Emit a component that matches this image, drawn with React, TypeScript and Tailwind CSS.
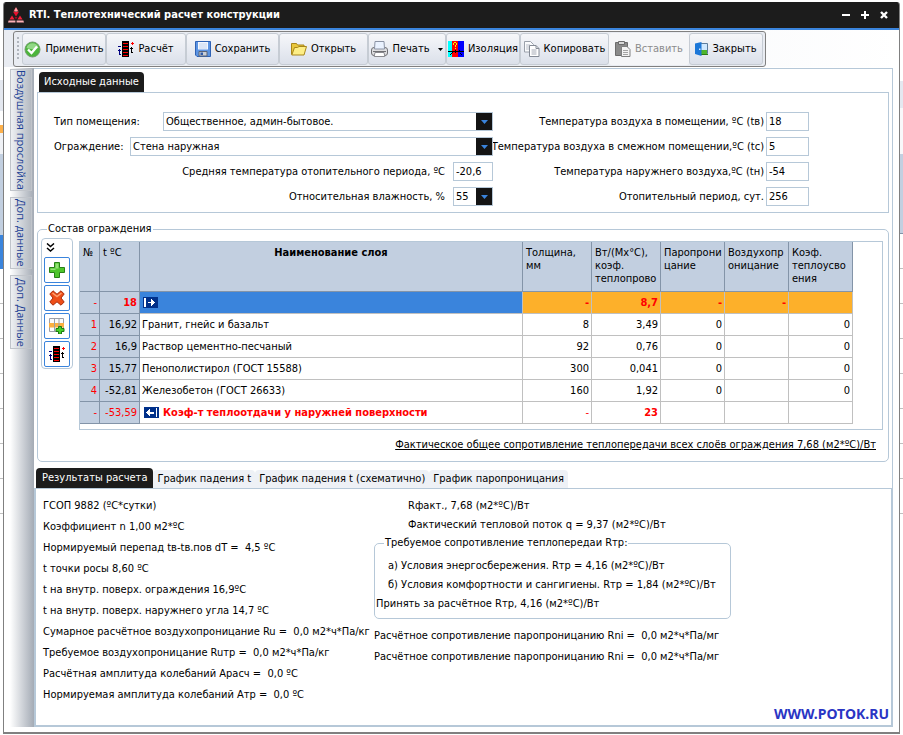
import { useState, type ReactNode } from 'react'

interface Layer {
  num: string
  temp: string
  name: string
  thickness: string
  conductivity: string
  vapor: string
  heat: string
}

const layers: Layer[] = [
  { num: '1', temp: '16,92', name: 'Гранит, гнейс и базальт', thickness: '8', conductivity: '3,49', vapor: '0', heat: '0' },
  { num: '2', temp: '16,9', name: 'Раствор цементно-песчаный', thickness: '92', conductivity: '0,76', vapor: '0', heat: '0' },
  { num: '3', temp: '15,77', name: 'Пенополистирол (ГОСТ 15588)', thickness: '300', conductivity: '0,041', vapor: '0', heat: '0' },
  { num: '4', temp: '-52,81', name: 'Железобетон (ГОСТ 26633)', thickness: '160', conductivity: '1,92', vapor: '0', heat: '0' },
]

const results = [
  'ГСОП 9882 (ºC*сутки)',
  'Коэффициент n 1,00 м2*ºC',
  'Нормируемый перепад tв-tв.пов dT =\u00a0 4,5 ºC',
  't точки росы 8,60 ºC',
  't на внутр. поверх. ограждения 16,9ºC',
  't на внутр. поверх. наружнего угла 14,7 ºC',
  'Сумарное расчётное воздухопроницание Ru =\u00a0 0,0 м2*ч*Па/кг',
  'Требуемое воздухопроницание Ruтр =\u00a0 0,0 м2*ч*Па/кг',
  'Расчётная амплитуда колебаний Арасч =\u00a0 0,0 ºC',
  'Нормируемая амплитуда колебаний Атр =\u00a0 0,0 ºC',
]

const resultTabs = ['Результаты расчета', 'График падения t', 'График падения t (схематично)', 'График паропроницания']

/* icons */

function LogoIcon() {
  return (
    <svg width="16" height="16" viewBox="0 0 16 16" aria-hidden="true">
      <path d="M8 0l2.600 4.600H5.400z" fill="#ff7078" />
      <path d="M5.200 5h5.600L8 9.500z" fill="#e8102c" />
      <path d="M4 8.500l2.600 4H1.400zM12 8.500l2.600 4H9.400z" fill="#f0203a" />
      <path d="M6.500 10h3L8 12.500z" fill="#a00a20" />
      <path d="M.6 13.500h6.800v2H0zM8.600 13.500h6.800l.6 2H8.600z" fill="#ffb0b6" />
      <path d="M7.500 1.500h1v3h-1z" fill="#ffd0d4" />
    </svg>
  )
}

function CheckIcon() {
  return (
    <svg width="17" height="17" viewBox="0 0 17 17" className="shrink-0" aria-hidden="true">
      <circle cx="8.500" cy="8.500" r="7.500" fill="#4cb53c" stroke="#6f9a6a" />
      <path d="M2.500 7a6.200 6.200 0 0 1 12 0c-4 1.500-8 1.500-12 0z" fill="#92d886" />
      <path d="M4 8.500l3.500 3.500L13 5.500" fill="none" stroke="#fff" strokeWidth="2.400" />
    </svg>
  )
}

function CalcIcon() {
  return (
    <svg width="16" height="16" viewBox="0 0 16 16" shapeRendering="crispEdges" className="shrink-0" aria-hidden="true">
      <path d="M4 0h7v16H4z" fill="#000" />
      <path d="M5 2h5v1H5zM5 5h5v1H5zM5 8h5v1H5zM5 11h5v1H5zM5 14h5v1H5z" fill="#f00" />
      <path d="M0 5h3v1H0zM1 8h1v1h1v1H2v3h1v1H1v-4H0V9h1z" fill="#000080" />
      <path d="M14 1h1v1h1v1h-1v1h-1V3h-1V2h1z" fill="#f00" />
      <path d="M13 6h1v1h1v1h-1v3h1v1h-2V8h-1V7h1z" fill="#000" />
    </svg>
  )
}

function SaveIcon() {
  return (
    <svg width="16" height="16" viewBox="0 0 16 16" className="shrink-0" aria-hidden="true">
      <path d="M.5.5h15v15H2L.5 14z" fill="#5b93e2" stroke="#2f62b4" />
      <path d="M3 1h10v7.500H3z" fill="#f4f8ff" />
      <path d="M4 3h8M4 5h8M4 7h8" stroke="#c3d4ee" />
      <path d="M4 10.500h8V15H4z" fill="#c9cfd8" stroke="#5a6478" />
      <path d="M5.500 11.500h2.500V14H5.500z" fill="#2f5aa8" />
    </svg>
  )
}

function FolderIcon() {
  return (
    <svg width="16" height="14" viewBox="0 0 16 14" className="shrink-0" aria-hidden="true">
      <path d="M.5 12.500V1.500h5l1 1.500h6.500v2.500" fill="#e9c73c" stroke="#a8861a" />
      <path d="M.8 13l2.700-7.500h3L8 4.500h7.500L13 13z" fill="#fdee86" stroke="#a8861a" />
    </svg>
  )
}

function PrinterIcon() {
  return (
    <svg width="17" height="16" viewBox="0 0 17 16" className="shrink-0" aria-hidden="true">
      <rect x=".5" y="6.500" width="16" height="8" rx="2.500" fill="#dedee0" stroke="#707074" />
      <path d="M4 .5h9l.5 7.500h-10z" fill="#eaf2ff" stroke="#8b93a4" />
      <path d="M2 10.500h13" stroke="#707074" />
      <path d="M4 11.500h9l.8 4H3.200z" fill="#fff" stroke="#8b8b90" />
    </svg>
  )
}

function IsolationIcon() {
  return (
    <svg width="16" height="16" viewBox="0 0 16 16" shapeRendering="crispEdges" className="shrink-0" aria-hidden="true">
      <path d="M0 0h4v16H0z" fill="#0ff" />
      <path d="M4 0h6v16H4z" fill="#f00" />
      <path d="M10 0h6v16h-6z" fill="#00f" />
      <path d="M5 2h1v2H5zM6 1h2v1H6zM8 2h1v2H8zM7 4h1v2H7zM7 7h1v1H7z" fill="#ff0" />
      <path d="M0 10h16v1H0zM3 12h1v-1h1v1H4v1H3v1H2v-1h1zM11 9h1v1h-1zM12 12h1v1h1v1h-1v-1h-1zM7 9h1v3H7z" fill="#000" />
    </svg>
  )
}

function CopyIcon() {
  return (
    <svg width="16" height="16" viewBox="0 0 16 16" className="shrink-0" aria-hidden="true">
      <path d="M.5.5h6l3 3V11h-9z" fill="#fafbfd" stroke="#9aa0aa" />
      <path d="M2 4h4M2 6h4M2 8h4" stroke="#b9bec8" />
      <path d="M5.500 4.500h6.500l3 3v8H5.500z" fill="#fff" stroke="#858b96" />
      <path d="M12 4.500v3h3" fill="none" stroke="#858b96" />
      <path d="M7.500 9h5M7.500 11h5M7.500 13h5" stroke="#a4a9b4" />
    </svg>
  )
}

function PasteIcon() {
  return (
    <svg width="16" height="16" viewBox="0 0 16 16" className="shrink-0" aria-hidden="true">
      <path d="M.5 1.500h12v13H.5z" fill="#8a8a8a" stroke="#6c6c6c" />
      <path d="M3.500.5h6v3h-6z" fill="#d8d8d8" stroke="#6c6c6c" />
      <path d="M6.500 5.500H12l3 3v7H6.500z" fill="#f4f4f4" stroke="#808080" />
      <path d="M8 9.500h5M8 11.500h5M8 13.500h5" stroke="#a4a4a4" />
    </svg>
  )
}

function DoorIcon() {
  return (
    <svg width="13" height="14" viewBox="0 0 13 14" className="shrink-0" aria-hidden="true">
      <path d="M5.500 1.500h7v10h-7z" fill="#cfe8ff" stroke="#5d7c9c" />
      <path d="M6 8h6v4H6z" fill="#4fb52c" />
      <path d="M6 12.500h7" stroke="#2b7a14" />
      <path d="M0 1.500L6.500 0v14L0 12z" fill="#1c77d8" />
      <path d="M4 6.500h1.500v1.500H4z" fill="#d9edff" />
    </svg>
  )
}

function PlusIcon() {
  return (
    <svg width="16" height="16" viewBox="0 0 16 16" aria-hidden="true">
      <path d="M5.500.5h5v5h5v5h-5v5h-5v-5h-5v-5h5z" fill="#4fc52c" stroke="#268016" />
      <path d="M6.500 1.500h3v5h-3zM1.500 6.500h5v1.500h-5z" fill="#93e276" />
    </svg>
  )
}

function CrossIcon() {
  return (
    <svg width="16" height="16" viewBox="0 0 16 16" aria-hidden="true">
      <path
        d="M4 .8L8 4.200 12 .8 15.200 4 12 8l3.200 4-3.200 3.200L8 11.800 4 15.200.8 12 4 8 .8 4z"
        fill="#ee4e18"
        stroke="#a82c0a"
        strokeLinejoin="round"
      />
      <path d="M3.500 3L8 6.500 12.500 3" fill="none" stroke="#ffa070" strokeWidth="1.500" />
    </svg>
  )
}

function AddRowIcon() {
  return (
    <svg width="16" height="16" viewBox="0 0 16 16" aria-hidden="true">
      <path d="M.5.500h14v13H.5z" fill="#fafbfc" stroke="#9a9fa8" />
      <path d="M0 5h15v4.500H0z" fill="#fbb040" />
      <path d="M5.500 0v14M10 0v14" stroke="#9a9fa8" />
      <path d="M9.500 8.500h3v2h2.500v3h-2.500V16h-3v-2.500H7v-3h2.500z" fill="#46d02a" stroke="#1d7a10" />
    </svg>
  )
}

function ArrowBadge({ back }: { back?: boolean }) {
  return (
    <svg width="15" height="11" viewBox="0 0 15 11" shapeRendering="crispEdges" aria-hidden="true">
      <path d="M0 0h15v11H0z" fill="#00308a" />
      {back ? (
        <path d="M12 1h1v9h-1zM2 5h1V4h1V3h1V2h1v3h4v2H6v2H5V8H4V7H3V6H2z" fill="#fff" />
      ) : (
        <path d="M1 1h2v9H1zM12 5h-1V4h-1V3H9V2H8v3H5v1h3v3h1V8h1V7h1V6h1z" fill="#fff" />
      )}
    </svg>
  )
}

/* form pieces */

const boxClass = 'h-[19px] border border-[#b6c8d8] bg-white text-black outline-none'

function Combo({ id, value, className }: { id: string; value: string; className: string }) {
  return (
    <span className={`relative block ${className}`}>
      <select id={id} defaultValue={value} className={`${boxClass} w-full appearance-none pl-[2px] pr-4`}>
        <option>{value}</option>
      </select>
      <span className="pointer-events-none absolute inset-y-px right-px flex w-4 items-center justify-center bg-[#141414]">
        <svg width="7" height="4" viewBox="0 0 7 4" aria-hidden="true">
          <path d="M0 0h7L3.500 4z" fill="#3a84dc" />
        </svg>
      </span>
    </span>
  )
}

function NumberField({ id, label, value }: { id: string; label: string; value: string }) {
  return (
    <div className="flex items-center justify-end gap-[2px]">
      <label htmlFor={id} className="whitespace-nowrap">{label}</label>
      <input id={id} defaultValue={value} className={`${boxClass} w-[43px] px-[2px]`} />
    </div>
  )
}

function ToolButton({ icon, label, className, disabled, children }: {
  icon: ReactNode
  label: string
  className: string
  disabled?: boolean
  children?: ReactNode
}) {
  return (
    <button
      type="button"
      disabled={disabled}
      className={`flex items-center justify-center gap-1 overflow-hidden whitespace-nowrap rounded-[3px] border border-[#c6ccd4] bg-linear-to-b from-[#f6f7fa] to-[#dbe0ea] disabled:border-transparent disabled:from-[#f5f6f8] disabled:to-[#f5f6f8] disabled:text-[#8c8c8c] ${className}`}
    >
      {icon}
      <span>{label}</span>
      {children}
    </button>
  )
}

function SideButton({ label, children }: { label: string; children: ReactNode }) {
  return (
    <button type="button" aria-label={label} className="flex size-[26px] items-center justify-center rounded-[2px] border border-[#3a84dc] bg-white">
      {children}
    </button>
  )
}

function Toolbar() {
  return (
    <div className="flex">
      <div className="ml-[9px] flex h-9 items-stretch rounded-[3px] border border-[#808080] bg-[#e9ecf2] py-px pr-[2px]">
        <div className="mx-[3px] my-1 w-[2px] bg-[repeating-linear-gradient(to_bottom,#b0b5bd_0_2px,transparent_2px_4px)]" />
        <ToolButton icon={<CheckIcon />} label="Применить" className="w-[84px]" />
        <ToolButton icon={<CalcIcon />} label="Расчёт" className="w-[80px]" />
        <ToolButton icon={<SaveIcon />} label="Сохранить" className="w-[93px]" />
        <ToolButton icon={<FolderIcon />} label="Открыть" className="w-[89px]" />
        <ToolButton icon={<PrinterIcon />} label="Печать" className="w-[78px]">
          <svg width="5" height="3" viewBox="0 0 5 3" className="ml-1 shrink-0" aria-hidden="true">
            <path d="M0 0h5L2.500 3z" />
          </svg>
        </ToolButton>
        <ToolButton icon={<IsolationIcon />} label="Изоляция" className="w-[74px]" />
        <ToolButton icon={<CopyIcon />} label="Копировать" className="w-[89px]" />
        <ToolButton icon={<PasteIcon />} label="Вставить" className="w-[80px]" disabled />
        <ToolButton icon={<DoorIcon />} label="Закрыть" className="w-[74px]" />
      </div>
    </div>
  )
}

function SourceData() {
  return (
    <section>
      <div className="ml-[2px] flex">
        <button type="button" className="h-5 rounded-t-[4px] bg-[#1c1c1c] px-[5px] text-white">Исходные данные</button>
      </div>
      <div className="flex gap-px border border-[#b6c8d8] pb-[6px] pl-4 pt-[19px]">
        <div className="flex w-[439px] flex-col gap-[6px]">
          <div className="flex items-center justify-between">
            <label htmlFor="room">Тип помещения:</label>
            <Combo id="room" value="Общественное, админ-бытовое." className="w-[330px]" />
          </div>
          <div className="flex items-center justify-between">
            <label htmlFor="wall">Ограждение:</label>
            <Combo id="wall" value="Стена наружная" className="w-[363px]" />
          </div>
          <div className="flex items-center justify-end gap-2">
            <label htmlFor="avg">Средняя температура отопительного периода, ºC</label>
            <input id="avg" defaultValue="-20,6" className={`${boxClass} w-10 px-[2px]`} />
          </div>
          <div className="flex items-center justify-end gap-2">
            <label htmlFor="humidity">Относительная влажность, %</label>
            <Combo id="humidity" value="55" className="w-10" />
          </div>
        </div>
        <div className="flex w-[315px] flex-col gap-[6px]">
          <NumberField id="tv" label="Температура воздуха в помещении, ºC (tв)" value="18" />
          <NumberField id="tc" label="Температура воздуха в смежном помещении,ºC (tс)" value="5" />
          <NumberField id="tn" label="Температура наружнего воздуха,ºC (tн)" value="-54" />
          <NumberField id="period" label="Отопительный период, сут." value="256" />
        </div>
      </div>
    </section>
  )
}

const headCell = 'h-[50px] whitespace-nowrap border-b border-r border-[#8394a8] bg-[#c2cfe0] px-[3px] pt-1 text-left align-top font-normal leading-[13px]'
const sideCell = 'border-b border-r border-[#8394a8] bg-[#c2cfe0] px-[2px] text-right'
const bodyCell = 'h-[22px] border-b border-r border-[#c0c0c0] px-[2px] text-right'
const hotCell = 'border-b border-r border-[#c0c0c0] bg-[#fdb02a] px-[2px] text-right text-[#ff0000]'

function LayersTable() {
  return (
    <table className="w-full table-fixed border-separate border-spacing-0">
      <colgroup>
        <col className="w-5" />
        <col className="w-10" />
        <col />
        <col className="w-[69px]" />
        <col className="w-[69px]" />
        <col className="w-16" />
        <col className="w-16" />
        <col className="w-16" />
      </colgroup>
      <thead>
        <tr>
          <th className={headCell}>№</th>
          <th className={headCell}>t ºC</th>
          <th className="border-b border-r border-[#8394a8] bg-[#c2cfe0] pt-1 text-center align-top leading-[13px]">Наименование слоя</th>
          <th className={headCell}>Толщина,<br />мм</th>
          <th className={headCell}>Вт/(Мх°C),<br />коэф.<br />теплопрово</th>
          <th className={headCell}>Паропрони<br />цание</th>
          <th className={headCell}>Воздухопр<br />оницание</th>
          <th className={headCell}>Коэф.<br />теплоусво<br />ения</th>
        </tr>
      </thead>
      <tbody>
        <tr className="h-[22px] font-bold">
          <td className={`${sideCell} font-normal text-[#ff0000]`}>-</td>
          <td className={`${sideCell} text-[#ff0000]`}>18</td>
          <td className="border-b border-r border-[#c0c0c0] bg-[#3a84dc] px-[3px]"><ArrowBadge /></td>
          <td className={hotCell}>-</td>
          <td className={hotCell}>8,7</td>
          <td className={hotCell}>-</td>
          <td className={hotCell}>-</td>
          <td className={hotCell} />
        </tr>
        {layers.map((l) => (
          <tr key={l.num}>
            <td className={`${sideCell} text-[#ff0000]`}>{l.num}</td>
            <td className={sideCell}>{l.temp}</td>
            <td className="border-b border-r border-[#c0c0c0] px-[2px] text-left">{l.name}</td>
            <td className={bodyCell}>{l.thickness}</td>
            <td className={bodyCell}>{l.conductivity}</td>
            <td className={bodyCell}>{l.vapor}</td>
            <td className={bodyCell} />
            <td className={bodyCell}>{l.heat}</td>
          </tr>
        ))}
        <tr className="text-[#ff0000]">
          <td className={sideCell}>-</td>
          <td className={sideCell}>-53,59</td>
          <td className="border-b border-r border-[#c0c0c0] px-1 font-bold">
            <span className="flex items-center gap-1"><ArrowBadge back />Коэф-т теплоотдачи у наружней поверхности</span>
          </td>
          <td className={bodyCell}>-</td>
          <td className={`${bodyCell} font-bold`}>23</td>
          <td className={bodyCell} />
          <td className={bodyCell} />
          <td className={bodyCell} />
        </tr>
      </tbody>
    </table>
  )
}

function Composition() {
  return (
    <fieldset className="mt-[9px] rounded-[5px] border border-[#b6c8d8] pb-[9px] pl-[3px] pr-[5px]">
      <legend className="ml-[6px] px-px leading-[14px]">Состав ограждения</legend>
      <div className="flex items-start gap-[6px] pt-[2px]">
        <div className="flex w-8 flex-col items-center gap-[2px] rounded-[4px] border border-[#b6c8d8] pb-px">
          <button type="button" aria-label="Свернуть" className="flex h-4 w-full items-center pl-1">
            <svg width="9" height="9" viewBox="0 0 9 9" aria-hidden="true">
              <path d="M1 .5l3.500 3L8 .5M1 5l3.500 3L8 5" fill="none" stroke="#000" strokeWidth="1.500" />
            </svg>
          </button>
          <SideButton label="Добавить"><PlusIcon /></SideButton>
          <SideButton label="Удалить"><CrossIcon /></SideButton>
          <SideButton label="Вставить слой"><AddRowIcon /></SideButton>
          <SideButton label="Расчёт"><CalcIcon /></SideButton>
        </div>
        <div className="mt-[3px] flex-1 border border-[#b6c8d8] pb-[5px] pr-[29px]">
          <LayersTable />
        </div>
      </div>
      <p className="mr-[7px] mt-[7px] text-right leading-[15px] underline">
        Фактическое общее сопротивление теплопередачи всех слоёв ограждения 7,68 (м2*ºC)/Вт
      </p>
    </fieldset>
  )
}

function Results() {
  const [tab, setTab] = useState(0)

  return (
    <section className="flex flex-1 flex-col">
      <div className="mt-[6px] flex items-end pl-[2px]">
        {resultTabs.map((name, i) => (
          <button
            key={name}
            type="button"
            onClick={() => setTab(i)}
            className={i === tab ? 'h-5 rounded-t-[4px] bg-[#1c1c1c] px-[6px] text-white' : 'h-[18px] rounded-t-[4px] bg-[#eef1f6] px-1'}
          >
            {name}
          </button>
        ))}
      </div>
      <div className="flex flex-1 border-b-2 border-l-2 border-r border-t border-[#b6c8d8] pl-[7px] pr-[2px] pt-[6px]">
        <ul className="w-[331px] whitespace-nowrap leading-[21px]">
          {results.map((r) => (
            <li key={r}>{r}</li>
          ))}
        </ul>
        <div className="flex-1 whitespace-nowrap pt-px leading-[19px]">
          <p className="pl-[34px]">Rфакт., 7,68 (м2*ºC)/Вт</p>
          <p className="pl-[34px]">Фактический тепловой поток q = 9,37 (м2*ºC)/Вт</p>
          <fieldset className="mt-[2px] w-[357px] rounded-[5px] border border-[#b6c8d8] pb-[5px] pl-px pt-[6px]">
            <legend className="ml-2 px-px leading-[14px]">Требуемое сопротивление теплопередаи Rтр:</legend>
            <p className="pl-3">а) Условия энергосбережения. Rтр = 4,16 (м2*ºC)/Вт</p>
            <p className="pl-3">б) Условия комфортности и сангигиены. Rтр = 1,84 (м2*ºC)/Вт</p>
            <p>Принять за расчётное Rтр, 4,16 (м2*ºC)/Вт</p>
          </fieldset>
          <div className="mt-[6px] leading-[21px]">
            <p>Расчётное сопротивление паропроницанию Rni =&nbsp; 0,0 м2*ч*Па/мг</p>
            <p>Расчётное сопротивление паропроницанию Rni =&nbsp; 0,0 м2*ч*Па/мг</p>
          </div>
        </div>
        <a href="#potok" className="self-end font-['Noto_Sans',sans-serif] text-[14px] font-bold leading-[22px] text-[#2a35c4]">
          WWW.POTOK.RU
        </a>
      </div>
    </section>
  )
}

const sideTab =
  "flex w-[22px] items-center justify-center whitespace-nowrap border border-[#c0c4ca] bg-linear-to-r from-[#eef0f3] to-[#b4bac2] font-['Open_Sans',sans-serif] text-[11px] text-[#1c3f94] [writing-mode:vertical-rl]"

export default function App() {
  return (
    <div className="flex min-h-screen bg-white font-['DejaVu_Sans_Condensed','DejaVu_Sans',sans-serif] text-[11px] leading-[14px] text-black">
      {/* edge of the window lying behind */}
      <div className="w-[3px]">
        <div className="h-20" />
        <div className="h-[31px] bg-[#e4e8f0]" />
        <div className="h-[14px]" />
        <div className="h-2 bg-[#fdb04a]" />
        <div className="h-[21px] bg-[#f0f2f6]" />
        <div className="h-[81px] bg-[#c2cfe0]" />
        <div className="h-[34px] bg-[#3a84dc]" />
        <div className="h-[245px] bg-[repeating-linear-gradient(to_bottom,transparent_0_34px,#c0c0c0_34px_35px)]" />
      </div>

      <main className="mb-px mt-[2px] flex flex-1 flex-col overflow-hidden rounded-t-[3px] border-b-2 border-l border-r border-[#808080] bg-white">
        <header className="flex h-7 items-center border-b-2 border-[#3a84dc] bg-[#1c1c1c] pl-1 pr-2 text-white">
          <LogoIcon />
          <h1 className="ml-[5px] flex-1 text-[11px] font-bold">RTI. Теплотехнический расчет конструкции</h1>
          <div className="flex gap-1">
            <button type="button" aria-label="Свернуть окно" className="flex size-[15px] items-center justify-center">
              <svg width="8" height="8" viewBox="0 0 8 8"><path d="M0 3h8v2H0z" fill="#fff" /></svg>
            </button>
            <button type="button" aria-label="Развернуть окно" className="flex size-[15px] items-center justify-center">
              <svg width="8" height="8" viewBox="0 0 8 8"><path d="M0 3h3V0h2v3h3v2H5v3H3V5H0z" fill="#fff" /></svg>
            </button>
            <button type="button" aria-label="Закрыть окно" className="flex size-[15px] items-center justify-center">
              <svg width="8" height="8" viewBox="0 0 8 8"><path d="M1 1l6 6M7 1L1 7" stroke="#fff" strokeWidth="2.400" /></svg>
            </button>
          </div>
        </header>

        <div className="bg-linear-to-r from-[#e9ecf2] to-white pt-px">
          <Toolbar />
        </div>

        <div className="mt-px flex flex-1 pb-[5px] pl-[6px] pr-[6px]">
          <aside className="flex w-6 flex-col gap-[6px] bg-linear-to-r from-white to-[#a4abb5] pt-px">
            <button type="button" className={`${sideTab} h-[122px]`}>Воздушная прослойка</button>
            <button type="button" className={`${sideTab} h-[72px]`}>Доп. данные</button>
            <button type="button" className={`${sideTab} h-[74px]`}>Доп. Данные</button>
          </aside>
          <div className="flex flex-1 flex-col border-r border-t border-[#b6c8d8] pt-[3px]">
            <div className="pl-[3px] pr-[3px]">
              <SourceData />
              <Composition />
            </div>
            <Results />
          </div>
        </div>
      </main>

      <div className="w-[3px]">
        <div className="h-[81px]" />
        <div className="h-[27px] bg-[#e4e8f0]" />
        <div className="h-[46px] bg-[#f8f8fa]" />
        <div className="h-[80px] border-b border-[#8394a8] bg-[#c2cfe0]" />
        <div className="h-[281px] bg-[repeating-linear-gradient(to_bottom,transparent_0_34px,#c0c0c0_34px_35px)]" />
      </div>
    </div>
  )
}
